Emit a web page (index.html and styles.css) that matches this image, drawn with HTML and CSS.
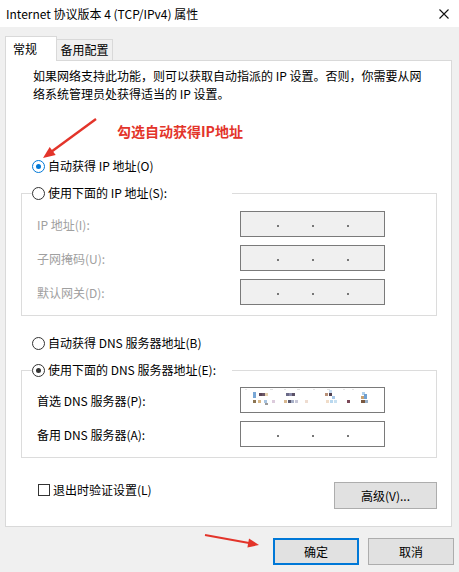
FILE: index.html
```html
<!DOCTYPE html>
<html lang="zh-CN">
<head>
    <meta charset="UTF-8">
    <title>Internet 协议版本 4 (TCP/IPv4) 属性</title>
    <link rel="stylesheet" href="styles.css">
</head>
<body>
    <div class="titlebar">
        <span class="title">Internet 协议版本 4 (TCP/IPv4) 属性</span>
        <svg class="close" width="10" height="10" viewBox="0 0 10 10">
            <path d="M0.5 0.5 L9.5 9.5 M9.5 0.5 L0.5 9.5" stroke="#111" stroke-width="1.1" fill="none"/>
        </svg>
    </div>

    <div class="tabs">
        <div class="tab active">常规</div>
        <div class="tab">备用配置</div>
    </div>

    <div class="panel">
        <div class="desc">
            <span class="desc-line">如果网络支持此功能，则可以获取自动指派的 IP 设置。否则，你需要从网</span>
            <span class="desc-line">络系统管理员处获得适当的 IP 设置。</span>
        </div>

        <div class="radio-row first"><span class="radio checked focus"></span>自动获得 IP 地址(O)</div>

        <fieldset class="group">
            <legend><span class="radio-row"><span class="radio"></span>使用下面的 IP 地址(S):</span></legend>
            <div class="field disabled">
                <span class="field-label">IP 地址(I):</span>
                <span class="ip"><i></i><i></i><i></i></span>
            </div>
            <div class="field disabled">
                <span class="field-label">子网掩码(U):</span>
                <span class="ip"><i></i><i></i><i></i></span>
            </div>
            <div class="field disabled">
                <span class="field-label">默认网关(D):</span>
                <span class="ip"><i></i><i></i><i></i></span>
            </div>
        </fieldset>

        <div class="radio-row dns-auto"><span class="radio"></span>自动获得 DNS 服务器地址(B)</div>

        <fieldset class="group dns">
            <legend><span class="radio-row"><span class="radio checked"></span>使用下面的 DNS 服务器地址(E):</span></legend>
            <div class="field">
                <span class="field-label">首选 DNS 服务器(P):</span>
                <span class="ip white mosaic">
                    <svg width="143" height="24" viewBox="0 0 143 24">
                        <!-- blurred address -->
                        <rect x="4" y="1" width="2" height="1" fill="#e4e4e4"/>
                        <rect x="29" y="1" width="3" height="1" fill="#e0e0e0"/>
                        <rect x="43" y="1" width="2" height="1" fill="#e4e4e4"/>
                        <rect x="56" y="1" width="3" height="1" fill="#e0e0e0"/>
                        <rect x="72" y="1" width="2" height="1" fill="#e4e4e4"/>
                        <rect x="86" y="1" width="3" height="1" fill="#e0e0e0"/>
                        <rect x="102" y="1" width="2" height="1" fill="#e4e4e4"/>
                        <rect x="111" y="1" width="2" height="1" fill="#e4e4e4"/>
                        <rect x="12" y="4" width="3" height="6" fill="#79a7d6"/>
                        <rect x="18" y="5" width="3" height="3" fill="#5b4456"/>
                        <rect x="21" y="5" width="3" height="3" fill="#6a5666"/>
                        <rect x="24" y="5" width="3" height="3" fill="#e6d2b0"/>
                        <rect x="12" y="12" width="3" height="3" fill="#8c7552"/>
                        <rect x="17" y="12" width="3" height="3" fill="#d8b888"/>
                        <rect x="23" y="12" width="3" height="3" fill="#a8c4e0"/>
                        <rect x="24" y="15" width="3" height="2" fill="#9a9a9a"/>
                        <rect x="31" y="12" width="3" height="3" fill="#dccbdc"/>
                        <rect x="45" y="5" width="3" height="3" fill="#6a6a88"/>
                        <rect x="48" y="5" width="3" height="3" fill="#8a8aa8"/>
                        <rect x="51" y="5" width="3" height="3" fill="#5a5066"/>
                        <rect x="43" y="12" width="3" height="3" fill="#d8b890"/>
                        <rect x="47" y="12" width="3" height="3" fill="#585870"/>
                        <rect x="50" y="12" width="3" height="3" fill="#a8b0c8"/>
                        <rect x="54" y="12" width="3" height="3" fill="#c8c8d8"/>
                        <rect x="64" y="12" width="3" height="3" fill="#eedcd0"/>
                        <rect x="84" y="5" width="3" height="3" fill="#b89078"/>
                        <rect x="88" y="2" width="3" height="3" fill="#c8dcf0"/>
                        <rect x="88" y="5" width="3" height="3" fill="#504050"/>
                        <rect x="91" y="8" width="3" height="3" fill="#a8c8e8"/>
                        <rect x="85" y="12" width="3" height="3" fill="#f0dcc8"/>
                        <rect x="89" y="12" width="3" height="3" fill="#b8d8f0"/>
                        <rect x="93" y="12" width="3" height="3" fill="#c8e0f0"/>
                        <rect x="106" y="12" width="3" height="3" fill="#7a4858"/>
                        <rect x="121" y="4" width="3" height="3" fill="#b0d0ec"/>
                        <rect x="123" y="6" width="3" height="5" fill="#70a0d0"/>
                        <rect x="120" y="8" width="3" height="3" fill="#c8a070"/>
                        <rect x="120" y="12" width="4" height="3" fill="#7a5840"/>
                        <rect x="124" y="12" width="3" height="3" fill="#98b0c8"/>
                    </svg>
                </span>
            </div>
            <div class="field">
                <span class="field-label">备用 DNS 服务器(A):</span>
                <span class="ip white"><i></i><i></i><i></i></span>
            </div>
        </fieldset>

        <div class="options">
            <div class="check-row"><span class="checkbox"></span>退出时验证设置(L)</div>
            <button class="btn advanced">高级(V)...</button>
        </div>
    </div>

    <div class="actions">
        <button class="btn primary">确定</button>
        <button class="btn">取消</button>
    </div>

    <div class="annotation">勾选自动获得IP地址</div>
    <svg class="arrows" width="459" height="572" viewBox="0 0 459 572">
        <line x1="96" y1="119" x2="51" y2="152" stroke="#e3342a" stroke-width="2.4"/>
        <polygon points="43,158 55.7,154.9 49.7,146.9" fill="#e3342a"/>
        <line x1="205" y1="535" x2="249" y2="543" stroke="#e3342a" stroke-width="2.2"/>
        <polygon points="259,545 247.4,547.6 249,538.4" fill="#e3342a"/>
    </svg>
</body>
</html>
```

FILE: styles.css
```css
body {
    margin: 0;
    width: 459px;
    height: 572px;
    overflow: hidden;
    position: relative;
    background-color: #f0f0f0;
    font-family: "Noto Sans CJK SC", "Noto Sans", sans-serif;
    font-size: 12px;
    color: #000;
}
.titlebar {
    height: 27px;
    display: flex;
    align-items: center;
    justify-content: space-between;
    padding: 0 10px 0 6px;
    background-color: #ffffff;
}
.title {
    font-size: 12px;
    line-height: 16px;
}
.tabs {
    display: flex;
    align-items: flex-end;
    margin: 9px 0 -1px 5px;
    position: relative;
    z-index: 1;
}
.tab {
    box-sizing: border-box;
    height: 22px;
    width: 57px;
    border: 1px solid #d9d9d9;
    background-color: #f0f0f0;
    text-align: center;
    line-height: 20px;
}
.tab.active {
    height: 25px;
    width: 52px;
    margin-right: -1px;
    border-bottom: none;
    background-color: #ffffff;
    text-align: left;
    padding-left: 7px;
    line-height: 24px;
    position: relative;
    z-index: 2;
}
.panel {
    box-sizing: border-box;
    width: 447px;
    height: 467px;
    margin-left: 5px;
    border: 1px solid #d9d9d9;
    background-color: #ffffff;
}
.panel .desc {
    display: flex;
    flex-direction: column;
    align-items: flex-start;
    padding: 6px 0 0 15px;
}
.desc-line {
    margin-left: 12px;
    line-height: 18px;
    white-space: nowrap;
}
.radio-row {
    display: flex;
    align-items: center;
    height: 18px;
    line-height: 18px;
    white-space: nowrap;
}
.radio-row.first {
    margin: 54px 0 0 26px;
}
.radio-row.dns-auto {
    margin: 18px 0 0 26px;
}
.radio {
    box-sizing: border-box;
    width: 13px;
    height: 13px;
    margin-right: 3px;
    border: 1px solid #333;
    border-radius: 50%;
    position: relative;
    flex-shrink: 0;
}
.radio.checked::after {
    content: "";
    position: absolute;
    left: 3px;
    top: 3px;
    width: 5px;
    height: 5px;
    border-radius: 50%;
    background-color: #333;
}
.radio.focus {
    border-color: #0078d7;
}
.radio.focus::after {
    background-color: #0078d7;
}
.group {
    box-sizing: border-box;
    width: 416px;
    min-width: 0;
    margin: 9px 0 0 15px;
    padding: 9px 0 10px 10px;
    border: 1px solid #dcdcdc;
}
.group.dns {
    padding-top: 8px;
}
.group legend {
    width: 200px;
    padding: 0;
}
.field {
    display: flex;
    align-items: center;
    height: 26px;
    margin-left: 5px;
}
.field + .field {
    margin-top: 8px;
}
.field-label {
    width: 203px;
}
.disabled .field-label {
    color: #a0a0a0;
}
.ip {
    box-sizing: border-box;
    display: flex;
    align-items: center;
    gap: 33px;
    width: 145px;
    height: 26px;
    padding-left: 36px;
    border: 1px solid #7a7a7a;
    background-color: #f0f0f0;
}
.ip i {
    width: 2px;
    height: 2px;
    margin-top: 4px;
    background-color: #777;
}
.ip.white {
    background-color: #ffffff;
}
.ip.mosaic {
    padding-left: 0;
}
.ip.mosaic svg {
    display: block;
}
.options {
    display: flex;
    justify-content: space-between;
    align-items: flex-start;
    margin-top: 23px;
    padding: 0 14px 0 32px;
}
.check-row {
    display: flex;
    align-items: center;
    height: 18px;
    line-height: 18px;
}
.checkbox {
    box-sizing: border-box;
    width: 12px;
    height: 12px;
    margin-right: 3px;
    border: 1px solid #333;
}
.btn {
    box-sizing: border-box;
    width: 86px;
    height: 27px;
    padding: 0;
    border: 1px solid #adadad;
    background-color: #e1e1e1;
    font-family: inherit;
    font-size: 12px;
    color: #000;
}
.btn.advanced {
    width: 103px;
    margin-top: 1px;
}
.btn.primary {
    border: 2px solid #0078d7;
}
.actions {
    display: flex;
    justify-content: flex-end;
    gap: 9px;
    margin-top: 11px;
    padding-right: 5px;
}
.annotation {
    position: absolute;
    left: 117px;
    top: 122px;
    font-size: 14px;
    font-weight: bold;
    line-height: 18px;
    color: #e3342a;
}
.arrows {
    position: absolute;
    left: 0;
    top: 0;
    pointer-events: none;
}
```
